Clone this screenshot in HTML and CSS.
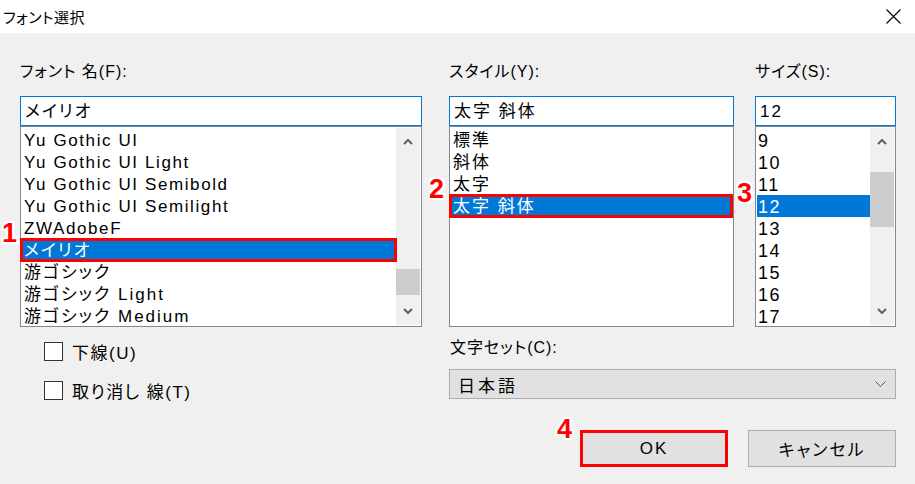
FILE: index.html
```html
<!DOCTYPE html>
<html lang="ja">
<head>
<meta charset="utf-8">
<title>フォント選択</title>
<link rel="stylesheet" href="styles.css">
</head>
<body>
<div class="dialog">
  <div class="titlebar">
    <span class="title">フォント選択</span>
    <svg class="close" viewBox="0 0 15 15" width="15" height="15"><path d="M0.5 0.5L14.5 14.5M14.5 0.5L0.5 14.5" stroke="#000" stroke-width="1.1" fill="none"/></svg>
  </div>
  <div class="content">
    <div class="columns">
      <div class="col col-name">
        <div class="label">フォント 名(F):</div>
        <div class="input">メイリオ</div>
        <div class="list">
          <div class="items">
            <div class="item latin">Yu Gothic UI</div>
            <div class="item latin">Yu Gothic UI Light</div>
            <div class="item latin">Yu Gothic UI Semibold</div>
            <div class="item latin">Yu Gothic UI Semilight</div>
            <div class="item latin">ZWAdobeF</div>
            <div class="item selected">メイリオ<span class="mark mark-row"></span><span class="anno anno-1">1</span></div>
            <div class="item">游ゴシック</div>
            <div class="item">游ゴシック Light</div>
            <div class="item">游ゴシック Medium</div>
          </div>
          <div class="scrollbar">
            <div class="sb-btn"><svg viewBox="0 0 10 6" width="10" height="6"><path d="M1 5L5 1L9 5" stroke="#606060" stroke-width="2" fill="none"/></svg></div>
            <div class="sb-track"><div class="thumb thumb-name"></div></div>
            <div class="sb-btn"><svg viewBox="0 0 10 6" width="10" height="6"><path d="M1 1L5 5L9 1" stroke="#606060" stroke-width="2" fill="none"/></svg></div>
          </div>
        </div>
      </div>
      <div class="col col-style">
        <div class="label">スタイル(Y):</div>
        <div class="input">太字 斜体</div>
        <div class="list">
          <div class="items">
            <div class="item">標準</div>
            <div class="item">斜体</div>
            <div class="item">太字</div>
            <div class="item selected">太字 斜体<span class="mark mark-row"></span><span class="anno anno-2">2</span></div>
          </div>
        </div>
      </div>
      <div class="col col-size">
        <div class="label">サイズ(S):</div>
        <div class="input">12</div>
        <div class="list">
          <div class="items">
            <div class="item num">9</div>
            <div class="item num">10</div>
            <div class="item num">11</div>
            <div class="item num selected">12<span class="anno anno-3">3</span></div>
            <div class="item num">13</div>
            <div class="item num">14</div>
            <div class="item num">15</div>
            <div class="item num">16</div>
            <div class="item num">17</div>
          </div>
          <div class="scrollbar">
            <div class="sb-btn"><svg viewBox="0 0 10 6" width="10" height="6"><path d="M1 5L5 1L9 5" stroke="#606060" stroke-width="2" fill="none"/></svg></div>
            <div class="sb-track"><div class="thumb thumb-size"></div></div>
            <div class="sb-btn"><svg viewBox="0 0 10 6" width="10" height="6"><path d="M1 1L5 5L9 1" stroke="#606060" stroke-width="2" fill="none"/></svg></div>
          </div>
        </div>
      </div>
    </div>
    <div class="bottom">
      <div class="checks">
        <label class="check"><span class="box"></span><span class="check-text">下線(U)</span></label>
        <label class="check"><span class="box"></span><span class="check-text">取り消し 線(T)</span></label>
      </div>
      <div class="charset">
        <div class="label label-charset">文字セット(C):</div>
        <div class="select">
          <span class="select-text">日本語</span>
          <svg viewBox="0 0 11 6" width="11" height="6"><path d="M0.5 0.5L5.5 5.5L10.5 0.5" stroke="#555" stroke-width="1" fill="none"/></svg>
        </div>
        <div class="buttons">
          <div class="btn-wrap">
            <div class="btn btn-ok">OK</div>
            <span class="anno anno-4">4</span>
          </div>
          <div class="btn">キャンセル</div>
        </div>
      </div>
    </div>
  </div>
</div>
</body>
</html>
```

FILE: styles.css
```css
* {
  box-sizing: border-box;
}

html,
body {
  margin: 0;
  padding: 0;
}

body {
  width: 915px;
  height: 484px;
  overflow: hidden;
  background: #f0f0f0;
  color: #000;
  font-family: "Liberation Sans", "Noto Sans CJK JP", sans-serif;
  font-feature-settings: "palt";
}

.titlebar {
  height: 33px;
  background: #fff;
  display: flex;
  align-items: center;
  justify-content: space-between;
  padding: 0 14px 0 3px;
}

.title {
  font-size: 15px;
  letter-spacing: 0.5px;
}

.close {
  display: block;
}

.content {
  padding: 28px 19px 0 20px;
}

.columns {
  display: flex;
}

.col-name {
  width: 402px;
}

.col-style {
  width: 285px;
  margin-left: 27px;
}

.col-size {
  width: 141px;
  margin-left: 21px;
}

.label {
  height: 20px;
  line-height: 22px;
  font-size: 16px;
  letter-spacing: 1px;
  margin-bottom: 15px;
  white-space: nowrap;
}

.input {
  height: 30px;
  border: 1px solid #0078d7;
  background: #fff;
  font-size: 17px;
  line-height: 29px;
  padding-left: 4px;
  letter-spacing: 2px;
}

.list {
  height: 201px;
  border: 1px solid #828790;
  background: #fff;
  padding: 1px;
  display: flex;
}

.items {
  flex: 1;
  padding-top: 1px;
  min-width: 0;
}

.item {
  position: relative;
  height: 22px;
  line-height: 24px;
  font-size: 17px;
  padding-left: 2px;
  white-space: nowrap;
  letter-spacing: 2px;
}

.item.latin {
  letter-spacing: 1.6px;
}

.item.num {
  font-size: 18px;
  letter-spacing: 1.5px;
  padding-left: 1px;
}

.item.selected {
  background: #0078d7;
  color: #fff;
}

.mark {
  position: absolute;
  border: 3px solid #ff0000;
}

.mark-row {
  left: -2px;
  right: -1px;
  top: -1px;
  bottom: -1px;
}

.anno {
  position: absolute;
  font-family: "Liberation Sans", Arial, sans-serif;
  font-weight: bold;
  font-size: 27px;
  line-height: 27px;
  color: #f00;
  letter-spacing: 0;
  text-shadow:
    2px 0 0 #fff, -2px 0 0 #fff, 0 2px 0 #fff, 0 -2px 0 #fff,
    2px 2px 0 #fff, -2px -2px 0 #fff, 2px -2px 0 #fff, -2px 2px 0 #fff;
}

.anno-1 {
  left: -20px;
  top: -19px;
}

.anno-2 {
  left: -22px;
  top: -19px;
}

.anno-3 {
  left: -20px;
  top: -15px;
}

.anno-4 {
  left: -23px;
  top: -14px;
}

.scrollbar {
  width: 24px;
  background: #f0f0f0;
  display: flex;
  flex-direction: column;
}

.sb-btn {
  height: 28px;
  display: flex;
  align-items: center;
  justify-content: center;
}

.sb-btn svg {
  display: block;
}

.sb-track {
  flex: 1;
}

.thumb {
  background: #cdcdcd;
}

.thumb-name {
  margin-top: 113px;
  height: 26px;
}

.thumb-size {
  margin-top: 16px;
  height: 55px;
}

.bottom {
  display: flex;
}

.checks {
  width: 429px;
  padding-left: 24px;
  padding-top: 15px;
}

.check {
  display: flex;
  align-items: center;
  height: 19px;
  margin-bottom: 20px;
}

.box {
  width: 19px;
  height: 19px;
  border: 1px solid #333;
  background: #fff;
  margin-right: 9px;
}

.check-text {
  font-size: 17px;
  letter-spacing: 1.5px;
  white-space: nowrap;
}

.charset {
  width: 447px;
  padding-top: 10px;
}

.label-charset {
  margin-bottom: 12px;
  padding-left: 1px;
}

.select {
  height: 30px;
  background: #e1e1e1;
  border: 1px solid #adadad;
  display: flex;
  align-items: center;
  justify-content: space-between;
  padding: 0 9px 0 8px;
}

.select-text {
  font-size: 17px;
  letter-spacing: 3px;
}

.select svg {
  display: block;
}

.buttons {
  margin-top: 31px;
  display: flex;
  justify-content: flex-end;
  gap: 20px;
}

.btn-wrap {
  position: relative;
}

.btn {
  width: 148px;
  height: 37px;
  background: #e1e1e1;
  border: 1px solid #adadad;
  display: flex;
  align-items: center;
  justify-content: center;
  font-size: 17px;
  letter-spacing: 2px;
}

.btn-ok {
  border: 3px solid #ff0000;
}
```
